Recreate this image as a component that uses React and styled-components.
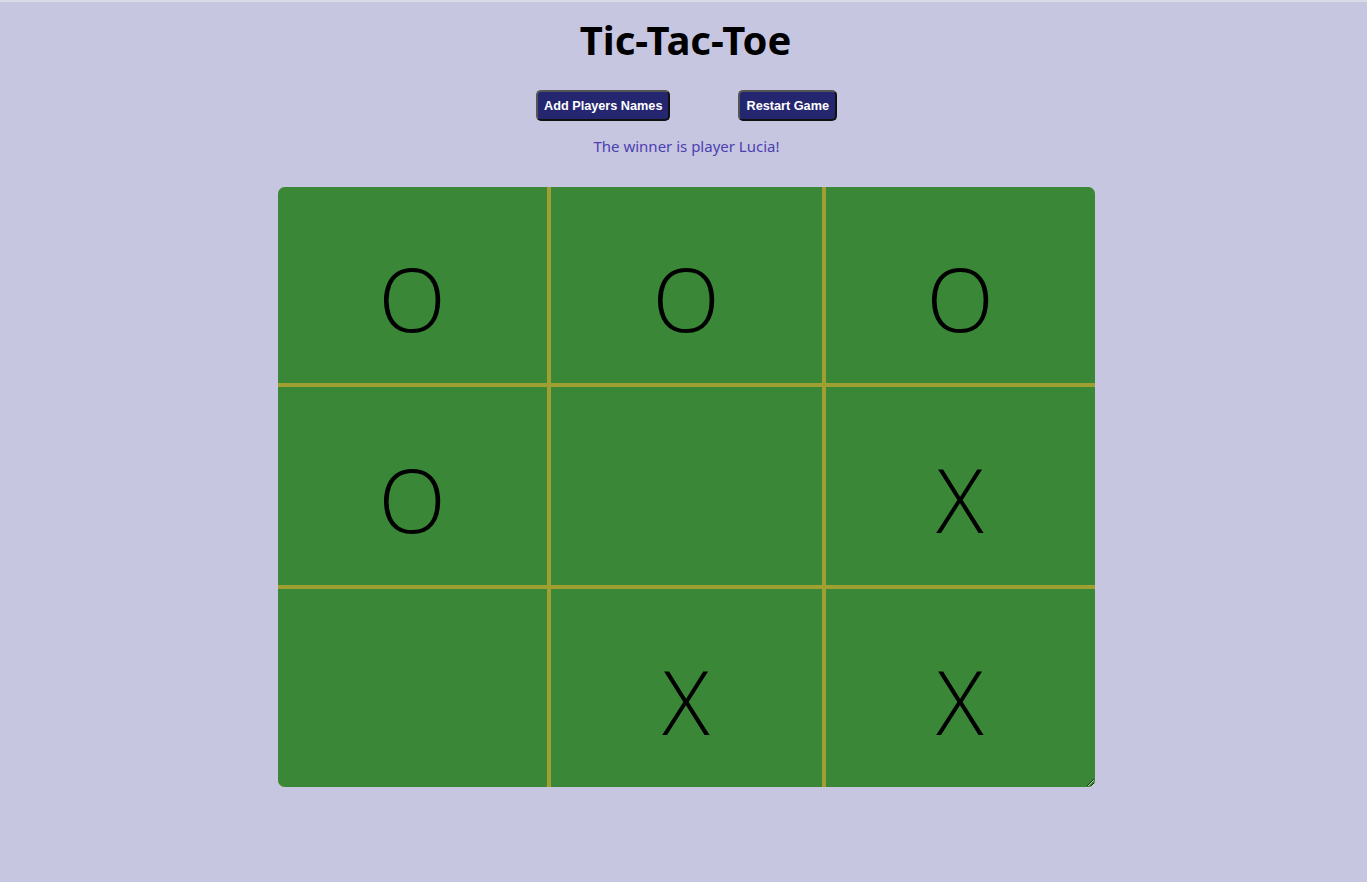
import React from "react";
import styled, { createGlobalStyle } from "styled-components";

const Global = createGlobalStyle`
  html, body { margin: 0; padding: 0; background: #c6c6e0; }
  body { border-top: 2px solid #dadae6; font-family: "Noto Sans", "Open Sans", sans-serif; }
`;

const Page = styled.div`
  display: flex;
  flex-direction: column;
  align-items: center;
  padding-bottom: 95px;
`;

const Title = styled.h1`
  margin: 14px 0 0;
  margin-left: 4px;
  font-family: "Noto Sans", sans-serif;
  font-weight: 700;
  font-size: 40px;
  line-height: 48px;
  color: #000;
`;

const Toolbar = styled.div`
  display: flex;
  gap: 68px;
  margin-top: 26px;
  margin-left: 6px;
`;

const Button = styled.button`
  height: 31px;
  padding: 0 6px;
  background: #252670;
  color: #fff;
  font-family: "Liberation Sans", Arial, sans-serif;
  font-size: 12.7px;
  font-weight: 700;
  border: 2px solid #111;
  border-color: #555 #111 #111 #555;
  border-radius: 5px;
  cursor: pointer;
`;

const Status = styled.p`
  margin: 15px 0 0;
  margin-left: 6px;
  font-family: "Noto Sans", sans-serif;
  font-size: 15px;
  line-height: 20px;
  color: #4a40b0;
`;

const Board = styled.div`
  margin-top: 31px;
  margin-left: 5px;
  width: 817px;
  height: 600px;
  display: grid;
  grid-template-columns: 269px 271px 269px;
  grid-template-rows: 196px 198px 198px;
  gap: 4px;
  background: #a0a032;
  border-radius: 7px;
  overflow: hidden;
  resize: both;
`;

const Cell = styled.div`
  background: #3a8837;
  display: flex;
  align-items: center;
  justify-content: center;
  padding-top: 26px;
  box-sizing: border-box;
  font-family: "Open Sans", sans-serif;
  font-weight: 300;
  font-size: 88px;
  line-height: 1;
  color: #000;
  cursor: pointer;
`;

const cells = ["O", "O", "O", "O", "", "X", "", "X", "X"];

export default function App() {
  return (
    <Page>
      <Global />
      <Title>Tic-Tac-Toe</Title>
      <Toolbar>
        <Button>Add Players Names</Button>
        <Button>Restart Game</Button>
      </Toolbar>
      <Status>The winner is player Lucia!</Status>
      <Board>
        {cells.map((c, i) => (
          <Cell key={i}>{c}</Cell>
        ))}
      </Board>
    </Page>
  );
}
